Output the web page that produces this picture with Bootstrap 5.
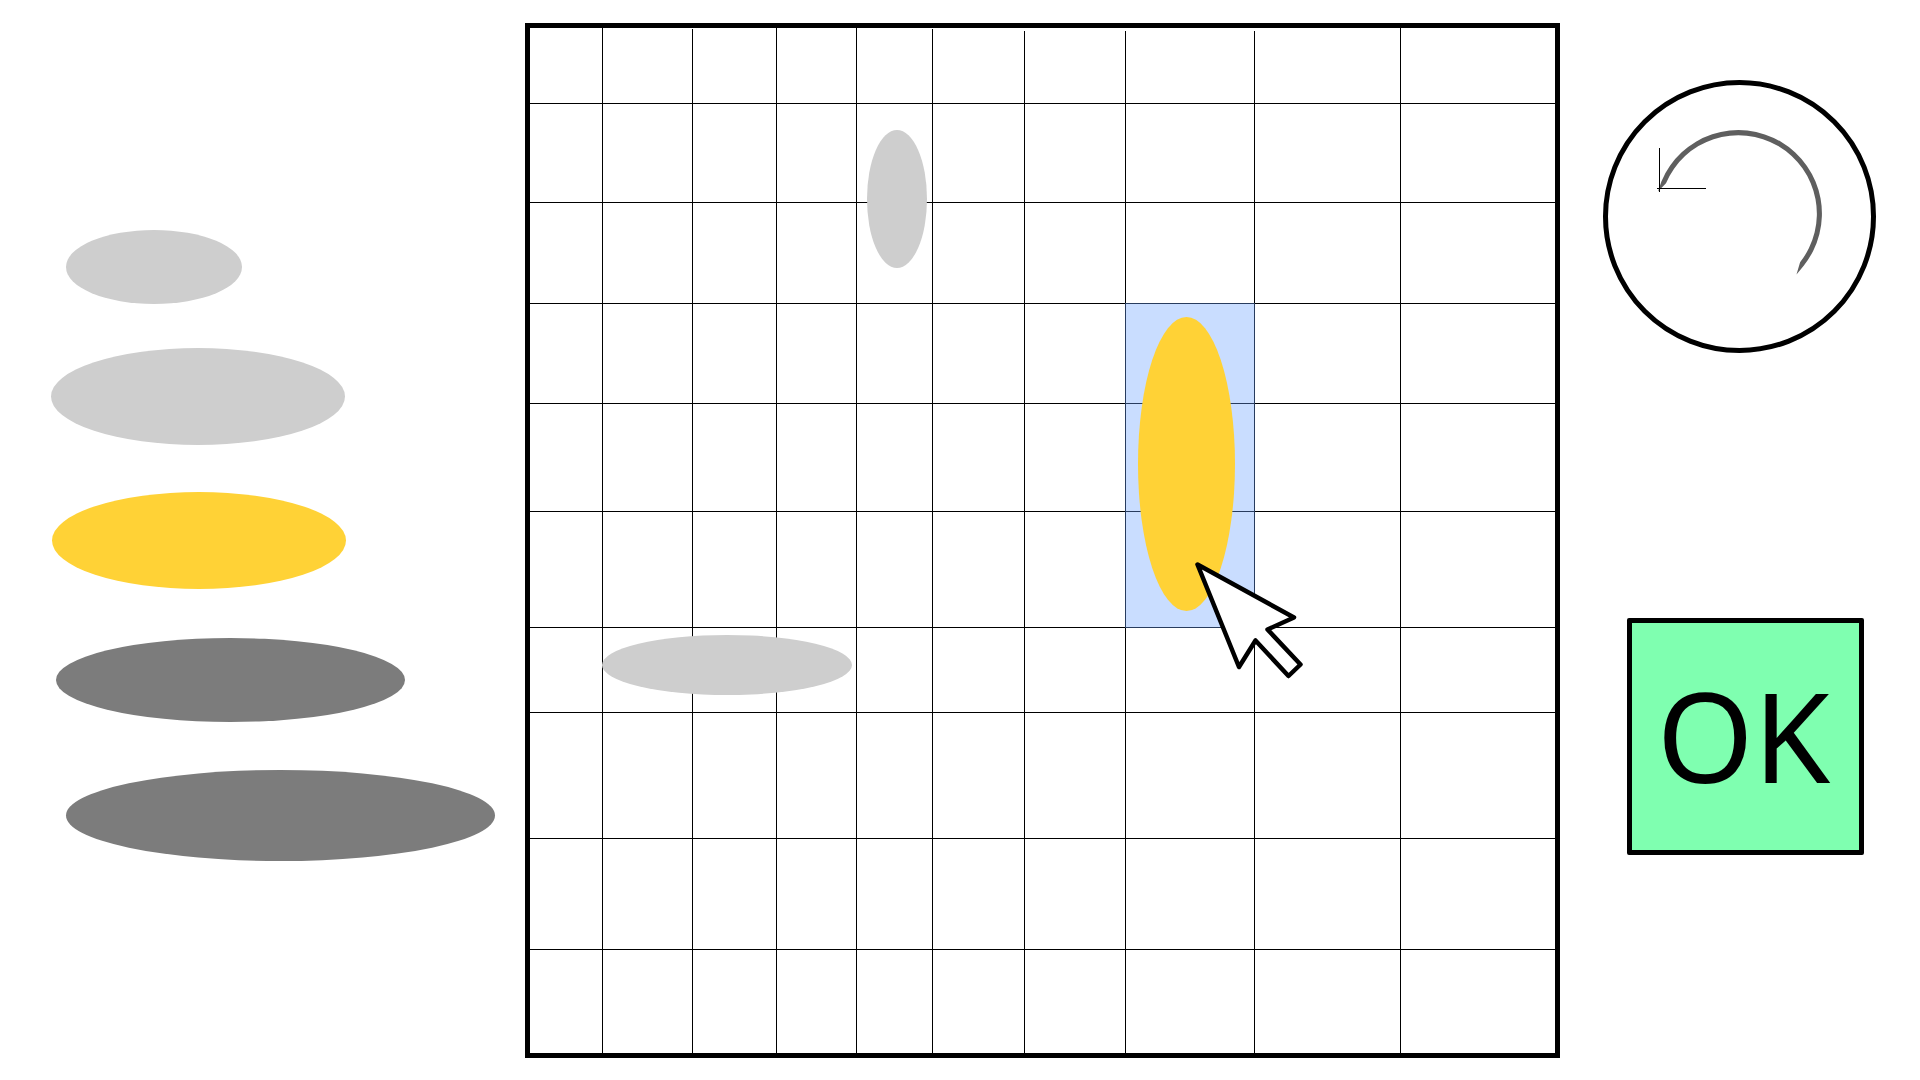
<!DOCTYPE html>
<html lang="en">
<head>
<meta charset="utf-8">
<meta name="viewport" content="width=device-width, initial-scale=1">
<title>Placement board</title>
<link href="https://cdn.jsdelivr.net/npm/bootstrap@5.3.0/dist/css/bootstrap.min.css" rel="stylesheet">
<style>
  body { background: #fff; font-family: "Noto Sans", "Open Sans", sans-serif; }
  .game { display: grid; grid-template-columns: 525fr 1035fr 360fr; padding: 23px 0 22px; }

  /* Pieces waiting in the tray */
  .tray { padding-top: 207px; }
  .piece { border: 0; padding: 0; border-radius: 50%; max-width: 100%; }
  .piece-grey { background: #cecece; }
  .piece-gold { background: #ffd236; }
  .piece-dark { background: #7c7c7c; }
  .piece-2 { width: 176px; height: 74px; margin: 0 0 44px 66px; }
  .piece-3 { width: 294px; height: 97px; margin: 0 0 47px 51px; }
  .piece-3.piece-gold { margin-left: 52px; }
  .piece-4 { width: 349px; height: 84px; margin: 2px 0 48px 56px; }
  .piece-5 { width: 429px; height: 91px; margin: 0 0 0 66px; }

  /* Board: uneven tracks, 1px gaps show as the grid lines */
  .board { aspect-ratio: 1; border: 5px solid #000; }
  .cells {
    display: grid; gap: 1px; background: #000;
    grid-template-columns: 72fr 89fr 83fr 79fr 75fr 91fr 100fr 128fr 145fr 154fr;
    grid-template-rows: 75fr 98fr 100fr 99fr 107fr 115fr 84fr 125fr 110fr 103fr;
  }
  .cell { background: #fff; position: relative; }
  .nick::after, .nick-sm::after { content: ""; position: absolute; top: 0; right: -1px; width: 1px; height: 3px; background: #fff; }
  .nick-sm::after { height: 1px; }
  .target { grid-area: 4 / 8 / 7 / 9; margin: -1px; background: rgba(109, 163, 255, .37); z-index: 1; }
  .overlay { z-index: 2; pointer-events: none; }

  /* Controls */
  .controls { padding-top: 57px; gap: 265px; }
  .undo-btn { width: 273px; aspect-ratio: 1; border: 5px solid #000; background: #fff; max-width: 100%; margin-right: 1px; }
  .ok-btn {
    width: 237px; aspect-ratio: 1; border: 5px solid #000; border-radius: 2px; background: #7fffb0; color: #000;
    font-size: 124px; line-height: 160px; margin-left: 11px; max-width: 100%;
  }
</style>
<script src="https://cdn.jsdelivr.net/npm/bootstrap@5.3.0/dist/js/bootstrap.bundle.min.js"></script>
</head>
<body>
<main class="game">
  <section class="tray d-flex flex-column align-items-start" aria-label="Pieces">
    <button type="button" class="piece piece-grey piece-2" aria-label="Small piece, placed"></button>
    <button type="button" class="piece piece-grey piece-3" aria-label="Medium piece, placed"></button>
    <button type="button" class="piece piece-gold piece-3" aria-label="Medium piece, selected"></button>
    <button type="button" class="piece piece-dark piece-4" aria-label="Large piece"></button>
    <button type="button" class="piece piece-dark piece-5" aria-label="Largest piece"></button>
  </section>

  <section class="board position-relative" aria-label="Board">
    <div class="cells w-100 h-100" id="cells"></div>
    <svg class="overlay position-absolute top-0 start-0 w-100 h-100" viewBox="0 0 1025 1025" aria-hidden="true">
      <ellipse cx="367" cy="171" rx="30" ry="69" fill="#cecece"/>
      <ellipse cx="197" cy="637" rx="125" ry="30" fill="#cecece"/>
      <ellipse cx="656.5" cy="436" rx="48.5" ry="147" fill="#ffd236"/>
      <path d="M667.5 536.5L764 589.5L737.5 601.5L770.5 636.5L758.5 648L725.5 612.5L709 639Z" fill="#fff" stroke="#000" stroke-width="4.5" stroke-linejoin="round"/>
    </svg>
  </section>

  <section class="controls d-flex flex-column align-items-center" aria-label="Controls">
    <button type="button" class="undo-btn rounded-circle p-0" aria-label="Undo">
      <svg class="d-block w-100 h-100" viewBox="5 5 263 263" aria-hidden="true">
        <path d="M55 111.5L58.4 101.4A83.5 83.5 0 1 1 200.7 185.7L193.5 194.5L197.1 182.2A78.5 78.5 0 1 0 63 103.3Z" fill="#5f5f5f"/>
        <path d="M56.5 68V112M54 108.5H103" fill="none" stroke="#000" shape-rendering="crispEdges"/>
      </svg>
    </button>
    <button type="button" class="ok-btn p-0 pb-1 pe-1">OK</button>
  </section>
</main>
<script>
  // Cells are placed explicitly so that the target can overlap them.
  const cells = document.getElementById('cells');
  const nicks = { 2: ' nick-sm', 5: ' nick-sm', 6: ' nick', 7: ' nick', 8: ' nick' };
  for (let r = 1; r <= 10; r++) {
    for (let c = 1; c <= 10; c++) {
      const cell = document.createElement('div');
      cell.className = 'cell' + (r === 1 && nicks[c] || '');
      cell.style.gridArea = r + ' / ' + c;
      cells.append(cell);
    }
  }
  const target = document.createElement('div');
  target.className = 'target';
  cells.append(target);
</script>
</body>
</html>
